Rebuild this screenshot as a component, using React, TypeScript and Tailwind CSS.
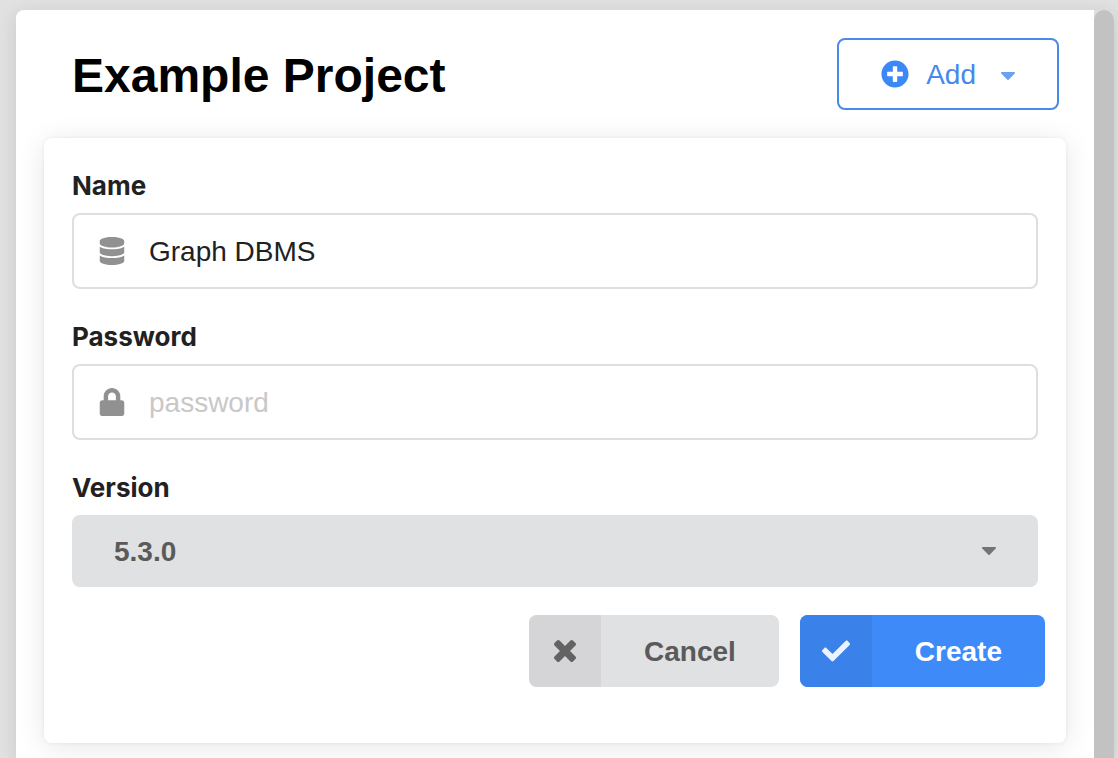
import { useState } from "react";
import type { ReactNode } from "react";
import { FaCheck, FaDatabase, FaLock, FaPlusCircle } from "react-icons/fa";

function CaretIcon({ className }: { className?: string }) {
  return (
    <svg
      aria-hidden="true"
      viewBox="384 640 1024 576"
      fill="currentColor"
      className={`h-2 w-[14px] ${className ?? ""}`}
    >
      <path d="M1408 704q0 26-19 45l-448 448q-19 19-45 19t-45-19l-448-448q-19-19-19-45t19-45 45-19h896q26 0 45 19t19 45z" />
    </svg>
  );
}

function CloseIcon() {
  return (
    <svg
      aria-hidden="true"
      viewBox="302 366 1188 1188"
      fill="currentColor"
      className="h-[22px] w-[22px]"
    >
      <path d="M1490 1322q0 40-28 68l-136 136q-28 28-68 28t-68-28l-294-294-294 294q-28 28-68 28t-68-28l-136-136q-28-28-28-68t28-68l294-294-294-294q-28-28-28-68t28-68l136-136q28-28 68-28t68 28l294 294 294-294q28-28 68-28t68 28l136 136q28 28 28 68t-28 68l-294 294 294 294q28 28 28 68z" />
    </svg>
  );
}

type FieldProps = {
  id: string;
  label: string;
  children: ReactNode;
};

function Field({ id, label, children }: FieldProps) {
  return (
    <div className="flex flex-col gap-2">
      <label
        htmlFor={id}
        className="font-[Inter,sans-serif] text-[26px] leading-[39px] font-bold text-[#212121]"
      >
        {label}
      </label>
      {children}
    </div>
  );
}

type TextFieldProps = {
  id: string;
  label: string;
  type: string;
  value: string;
  placeholder?: string;
  icon: ReactNode;
  onChange: (value: string) => void;
};

function TextField({ id, label, type, value, placeholder, icon, onChange }: TextFieldProps) {
  return (
    <Field id={id} label={label}>
      <div className="flex h-[76px] items-center rounded-lg border-2 border-[#dedede] bg-white">
        <span className="flex w-[75px] shrink-0 justify-center text-[#919191]">{icon}</span>
        <input
          id={id}
          type={type}
          value={value}
          placeholder={placeholder}
          onChange={(event) => onChange(event.target.value)}
          className="h-full min-w-0 flex-1 bg-transparent pt-0.5 pr-7 text-[28px] text-[#212121] outline-none placeholder:text-[#c8c8c8]"
        />
      </div>
    </Field>
  );
}

export default function App() {
  const [name, setName] = useState("Graph DBMS");
  const [password, setPassword] = useState("");

  return (
    <div className="flex min-h-screen bg-[#e1e1e1] pt-[10px] pr-1 pl-4 font-['Liberation_Sans',Arial,sans-serif]">
      <main className="flex flex-1 rounded-t-lg bg-[#dedede] shadow-[0_4px_18px_rgba(34,36,58,0.12)]">
        <div className="min-w-0 flex-1 overflow-hidden rounded-tl-lg bg-white px-7 pt-7">
          <header className="mb-7 flex items-center justify-between pr-[7px] pl-7">
            <h1 className="pt-1 text-5xl font-bold text-black">Example Project</h1>
            <button
              type="button"
              className="flex h-[72px] items-center rounded-lg border-2 border-[#4a8ae8] bg-white px-[42px] text-[28px] text-[#4689ee]"
            >
              <FaPlusCircle size={28} className="text-[#3d88f7]" />
              <span className="pt-0.5 pr-[25px] pl-[17px]">Add</span>
              <CaretIcon className="mt-1 text-[#6ba0f5]" />
            </button>
          </header>

          <form
            onSubmit={(event) => event.preventDefault()}
            className="flex flex-col gap-7 rounded-lg bg-white px-7 pt-7 pb-14 shadow-[0_4px_28px_rgba(0,0,0,0.1),0_0_4px_rgba(0,0,0,0.06)]"
          >
            <TextField
              id="dbms-name"
              label="Name"
              type="text"
              value={name}
              icon={<FaDatabase size={28} />}
              onChange={setName}
            />
            <TextField
              id="dbms-password"
              label="Password"
              type="password"
              value={password}
              placeholder="password"
              icon={<FaLock size={28} />}
              onChange={setPassword}
            />
            <Field id="dbms-version" label="Version">
              <div className="relative">
                <select
                  id="dbms-version"
                  className="block h-[72px] w-full appearance-none rounded-lg bg-[#e0e1e3] px-[42px] pt-0.5 text-[28px] font-bold text-[#5a5a5b]"
                >
                  <option>5.3.0</option>
                </select>
                <CaretIcon className="pointer-events-none absolute inset-y-0 right-[42px] my-auto text-[#747475]" />
              </div>
            </Field>
            <div className="-mr-[7px] flex justify-end gap-[21px] text-[28px] font-bold">
              <button
                type="button"
                className="flex h-[72px] items-center overflow-hidden rounded-lg bg-[#e0e1e3] text-[#5a5a5b]"
              >
                <span className="flex h-full w-[72px] items-center justify-center bg-[#d5d5d7] text-[#636364]">
                  <CloseIcon />
                </span>
                <span className="px-[43px] pt-0.5">Cancel</span>
              </button>
              <button
                type="submit"
                className="flex h-[72px] items-center overflow-hidden rounded-lg bg-[#3e8af8] text-white"
              >
                <span className="flex h-full w-[72px] items-center justify-center bg-[#3a82ea] text-[#ebf3fe]">
                  <FaCheck size={28} />
                </span>
                <span className="px-[43px] pt-0.5">Create</span>
              </button>
            </div>
          </form>
        </div>
        <div className="w-5 shrink-0 rounded-t-full bg-[#c2c2c2]" />
      </main>
    </div>
  );
}
